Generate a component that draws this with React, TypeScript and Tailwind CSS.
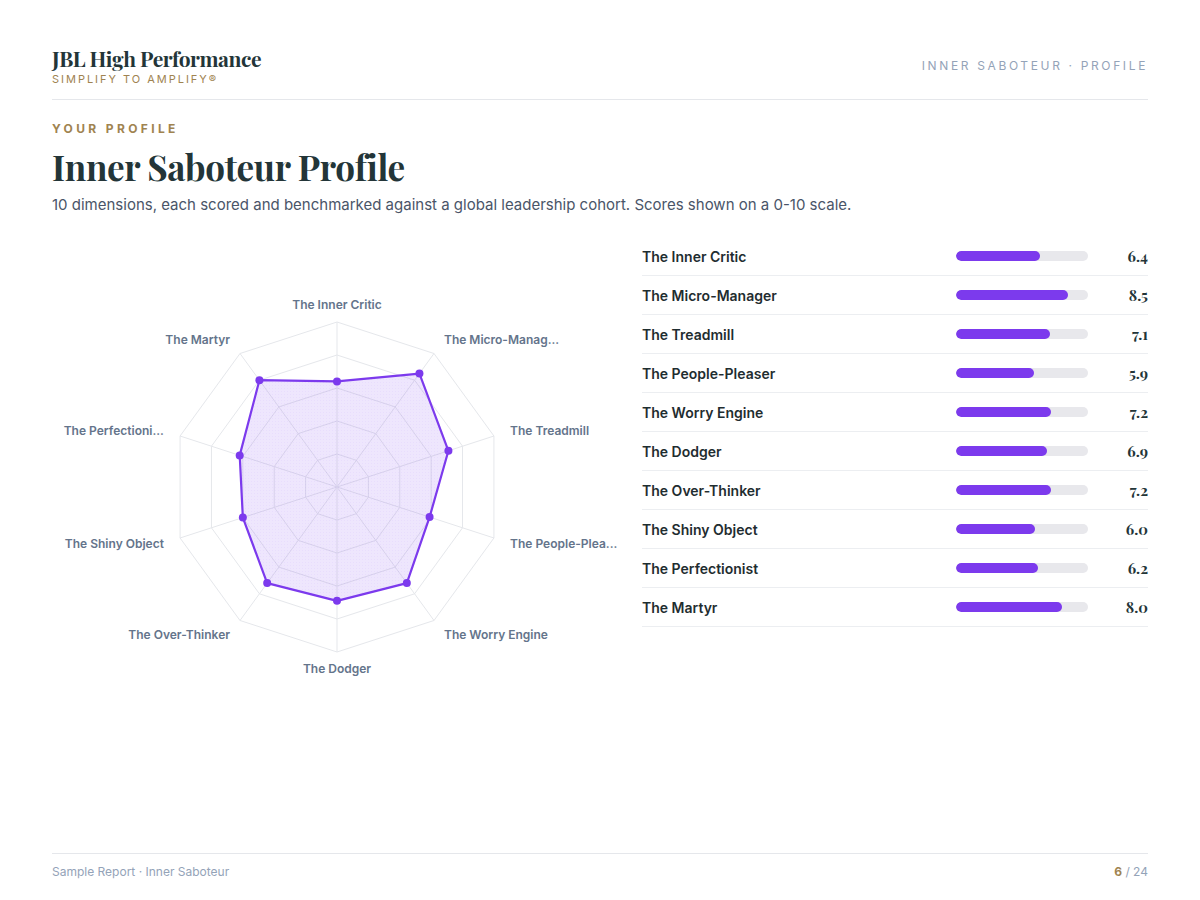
import React from 'react';

interface Dimension {
  name: string;
  score: number;
}

const dimensions: Dimension[] = [
  { name: 'The Inner Critic', score: 6.4 },
  { name: 'The Micro-Manager', score: 8.5 },
  { name: 'The Treadmill', score: 7.1 },
  { name: 'The People-Pleaser', score: 5.9 },
  { name: 'The Worry Engine', score: 7.2 },
  { name: 'The Dodger', score: 6.9 },
  { name: 'The Over-Thinker', score: 7.2 },
  { name: 'The Shiny Object', score: 6.0 },
  { name: 'The Perfectionist', score: 6.2 },
  { name: 'The Martyr', score: 8.0 },
];

const serif = { fontFamily: '"Playfair Display", "Liberation Serif", Georgia, serif' };

const RadarChart: React.FC = () => {
  const cx = 285;
  const cy = 250;
  const r = 165;
  const n = dimensions.length;

  const point = (i: number, radius: number) => {
    const a = (i / n) * Math.PI * 2;
    return [cx + radius * Math.sin(a), cy - radius * Math.cos(a)];
  };

  const ring = (f: number) =>
    dimensions.map((_, i) => point(i, r * f).join(',')).join(' ');

  const shape = dimensions.map((d, i) => point(i, (r * d.score) / 10));

  const shorten = (s: string) => (s.length > 16 ? s.slice(0, 15) + '...' : s);

  return (
    <svg width="568" height="500" viewBox="0 0 568 500">
      <defs>
        <pattern id="dots" width="3" height="3" patternUnits="userSpaceOnUse">
          <rect width="3" height="3" fill="#7c3aed" fillOpacity="0.13" />
          <circle cx="1.5" cy="1.5" r="0.5" fill="#7c3aed" fillOpacity="0.08" />
        </pattern>
      </defs>
      {[0.2, 0.4, 0.6, 0.8, 1].map((f) => (
        <polygon key={f} points={ring(f)} fill="none" stroke="#e5e7eb" strokeWidth="1" />
      ))}
      {dimensions.map((_, i) => {
        const [x, y] = point(i, r);
        return <line key={i} x1={cx} y1={cy} x2={x} y2={y} stroke="#e5e7eb" strokeWidth="1" />;
      })}
      <polygon
        points={shape.map((p) => p.join(',')).join(' ')}
        fill="url(#dots)"
        stroke="#7c3aed"
        strokeWidth="2.2"
        strokeLinejoin="round"
      />
      {shape.map(([x, y], i) => (
        <circle key={i} cx={x} cy={y} r="4" fill="#7c3aed" />
      ))}
      {dimensions.map((d, i) => {
        const [x, y] = point(i, 182);
        const s = Math.sin((i / n) * Math.PI * 2);
        const anchor = Math.abs(s) < 0.01 ? 'middle' : s > 0 ? 'start' : 'end';
        return (
          <text
            key={d.name}
            x={x}
            y={y + 1}
            textAnchor={anchor}
            dominantBaseline="middle"
            fontSize="12"
            fontWeight="600"
            fill="#64748b"
            style={{ fontFamily: 'Inter, "Liberation Sans", sans-serif' }}
          >
            {shorten(d.name)}
          </text>
        );
      })}
    </svg>
  );
};

const App: React.FC = () => {
  return (
    <div
      className="min-h-[900px] w-[1200px] bg-white px-[52px] pt-[44px] flex flex-col"
      style={{ fontFamily: 'Inter, "Liberation Sans", sans-serif' }}
    >
      <header className="flex items-center justify-between border-b border-[#e5e7eb] pb-[13px]">
        <div>
          <h1 className="text-[21px] leading-[28px] font-bold text-[#233538] tracking-[-0.02em]" style={serif}>
            JBL High Performance
          </h1>
          <p className="text-[11px] leading-[14px] tracking-[0.18em] text-[#a08350]">SIMPLIFY TO AMPLIFY®</p>
        </div>
        <div className="mt-[2px] text-[12px] tracking-[0.22em] text-[#94a3b8]">INNER SABOTEUR · PROFILE</div>
      </header>

      <div className="mt-[21px] text-[12px] leading-[16px] font-bold tracking-[0.28em] text-[#a08350]">
        YOUR PROFILE
      </div>
      <h2 className="mt-[8px] text-[35px] leading-[44px] font-bold text-[#233538] tracking-[-0.01em]" style={serif}>
        Inner Saboteur Profile
      </h2>
      <p className="mt-[5px] text-[15px] leading-[22px] text-[#4a5568]">
        10 dimensions, each scored and benchmarked against a global leadership cohort. Scores shown on a 0-10 scale.
      </p>

      <div className="mt-[21px] flex gap-[22px]">
        <div className="w-[568px] shrink-0">
          <RadarChart />
        </div>
        <div className="flex-1">
          {dimensions.map((d) => (
            <div key={d.name} className="flex h-[39px] items-center border-b border-[#eceef1]">
              <span className="flex-1 text-[14px] font-semibold text-[#1f2d30]">{d.name}</span>
              <div className="h-[10px] w-[132px] rounded-full bg-[#e8e8ec] overflow-hidden">
                <div className="h-full rounded-full bg-[#7c3aed]" style={{ width: `${d.score * 10}%` }} />
              </div>
              <span className="w-[60px] text-right text-[15px] font-bold text-[#233538]" style={serif}>
                {d.score.toFixed(1)}
              </span>
            </div>
          ))}
        </div>
      </div>

      <footer className="mt-auto flex justify-between border-t border-[#e5e7eb] pt-[10px] pb-[20px] text-[12px] leading-[16px] text-[#94a3b8]">
        <span>Sample Report · Inner Saboteur</span>
        <span>
          <span className="font-bold text-[#a08350]">6</span> / 24
        </span>
      </footer>
    </div>
  );
};

export default App;
